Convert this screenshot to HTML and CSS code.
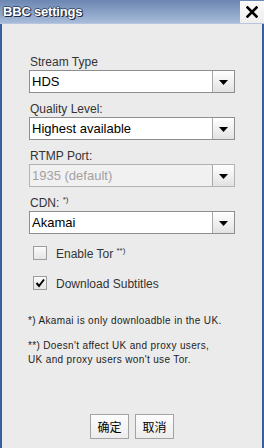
FILE: index.html
```html
<!DOCTYPE html>
<html>
<head>
<meta charset="utf-8">
<link rel="stylesheet" href="styles.css">
</head>
<body>
<div class="window">
  <div class="titlebar">
    <span class="title">BBC settings</span>
    <div class="close">
      <svg width="12" height="12" viewBox="0 0 12 12"><path d="M1.5 1.5 L10.5 10.5 M10.5 1.5 L1.5 10.5" stroke="#000" stroke-width="2.6" stroke-linecap="square" fill="none"/></svg>
    </div>
  </div>
  <div class="content">
    <div class="fields">
      <div class="field">
        <div class="label">Stream Type</div>
        <div class="combo"><div class="value">HDS</div><div class="arrow"><svg width="9" height="5" viewBox="0 0 9 5"><path d="M0 0 H9 L4.5 5 Z" fill="#000"/></svg></div></div>
      </div>
      <div class="field">
        <div class="label">Quality Level:</div>
        <div class="combo"><div class="value">Highest available</div><div class="arrow"><svg width="9" height="5" viewBox="0 0 9 5"><path d="M0 0 H9 L4.5 5 Z" fill="#000"/></svg></div></div>
      </div>
      <div class="field">
        <div class="label">RTMP Port:</div>
        <div class="combo disabled"><div class="value">1935 (default)</div><div class="arrow"><svg width="9" height="5" viewBox="0 0 9 5"><path d="M0 0 H9 L4.5 5 Z" fill="#000"/></svg></div></div>
      </div>
      <div class="field">
        <div class="label">CDN: <sup class="mark">*)</sup></div>
        <div class="combo"><div class="value">Akamai</div><div class="arrow"><svg width="9" height="5" viewBox="0 0 9 5"><path d="M0 0 H9 L4.5 5 Z" fill="#000"/></svg></div></div>
      </div>
    </div>
    <div class="checks">
      <div class="check-row">
        <span class="box"></span>
        <span class="check-text">Enable Tor <sup class="mark">**)</sup></span>
      </div>
      <div class="check-row">
        <span class="box"><svg width="12" height="12" viewBox="0 0 12 12"><path d="M2.5 6 L5 9 L10 2.5" stroke="#000" stroke-width="2" fill="none"/></svg></span>
        <span class="check-text">Download Subtitles</span>
      </div>
    </div>
    <div class="notes">
      <p>*) Akamai is only downloadble in the UK.</p>
      <p>**) Doesn't affect UK and proxy users,<br>UK and proxy users won't use Tor.</p>
    </div>
    <div class="buttons">
      <button class="btn">确定</button>
      <button class="btn">取消</button>
    </div>
  </div>
</div>
</body>
</html>
```

FILE: styles.css
```css
html, body {
  margin: 0;
  padding: 0;
}
body {
  width: 264px;
  height: 448px;
  overflow: hidden;
  font-family: "Liberation Sans", Arial, sans-serif;
}
.window {
  width: 264px;
  height: 448px;
  display: flex;
  flex-direction: column;
}
.titlebar {
  height: 24px;
  flex: none;
  display: flex;
  align-items: flex-start;
  background: linear-gradient(#6a86b2, #a8bbd9);
  border-bottom: 1px solid #b7c6de;
  box-sizing: border-box;
}
.title {
  margin: 4px 0 0 3px;
  font-weight: bold;
  font-size: 13px;
  line-height: 15px;
  letter-spacing: -0.2px;
  color: #fff;
  text-shadow: 1px 1px 0 #1c2a44, -1px 0 0 #3a4f74, 0 -1px 0 #3a4f74, 1px 0 0 #1c2a44;
}
.close {
  margin: 1px 0 0 auto;
  width: 24px;
  height: 22px;
  background: linear-gradient(#fbfbfb, #ededed);
  display: flex;
  align-items: center;
  justify-content: center;
}
.content {
  flex: 1;
  background: #ebebeb;
  border-left: 2px solid #3561a0;
  border-right: 2px solid #3561a0;
  padding: 31px 27px 9px 27px;
  display: flex;
  flex-direction: column;
  min-height: 0;
}
.fields {
  display: flex;
  flex-direction: column;
  gap: 9px;
}
.label {
  font-size: 12px;
  line-height: 14px;
  height: 14px;
  margin-bottom: 1px;
  color: #333;
  padding-left: 1px;
  white-space: nowrap;
}
.mark {
  font-size: 8px;
  line-height: 0;
  vertical-align: 5px;
}
.combo {
  height: 23px;
  box-sizing: border-box;
  display: flex;
  border: 1px solid #8e8e8e;
  background: #fff;
}
.combo.disabled {
  background: #f1f1f1;
  border-color: #b3b3b3;
}
.value {
  flex: 1;
  font-size: 13px;
  line-height: 21px;
  padding-left: 2px;
  color: #000;
  white-space: nowrap;
}
.disabled .value {
  color: #a2a2a2;
}
.arrow {
  width: 22px;
  box-sizing: border-box;
  border-left: 1px solid #a8a8a8;
  background: linear-gradient(#ffffff, #e2e2e2);
  display: flex;
  align-items: center;
  justify-content: center;
  padding-top: 2px;
}
.checks {
  margin-top: 12px;
  padding-left: 4px;
  display: flex;
  flex-direction: column;
  gap: 16px;
}
.check-row {
  display: flex;
  align-items: flex-start;
  height: 14px;
}
.box {
  width: 14px;
  height: 14px;
  box-sizing: border-box;
  border: 1px solid #9d9d9d;
  background: linear-gradient(#fbfbfb, #e4e4e4);
  display: flex;
  align-items: center;
  justify-content: center;
  flex: none;
}
.check-text {
  margin-left: 9px;
  margin-top: 1px;
  font-size: 12px;
  line-height: 14px;
  color: #333;
  white-space: nowrap;
}
.notes {
  margin-top: 24px;
  margin-left: -1px;
  font-size: 10px;
  line-height: 14px;
  letter-spacing: 0.35px;
  color: #1c1c1c;
  white-space: nowrap;
}
.notes p {
  margin: 0 0 11px 0;
}
.buttons {
  margin-top: auto;
  display: flex;
  justify-content: center;
  gap: 6px;
}
.btn {
  width: 39px;
  height: 25px;
  padding: 0;
  margin: 0;
  border: 1px solid #a3a3a3;
  background: linear-gradient(#fdfdfd, #ececec);
  font-family: "Noto Sans CJK SC", sans-serif;
  font-size: 12px;
  color: #000;
  border-radius: 0;
}
```
